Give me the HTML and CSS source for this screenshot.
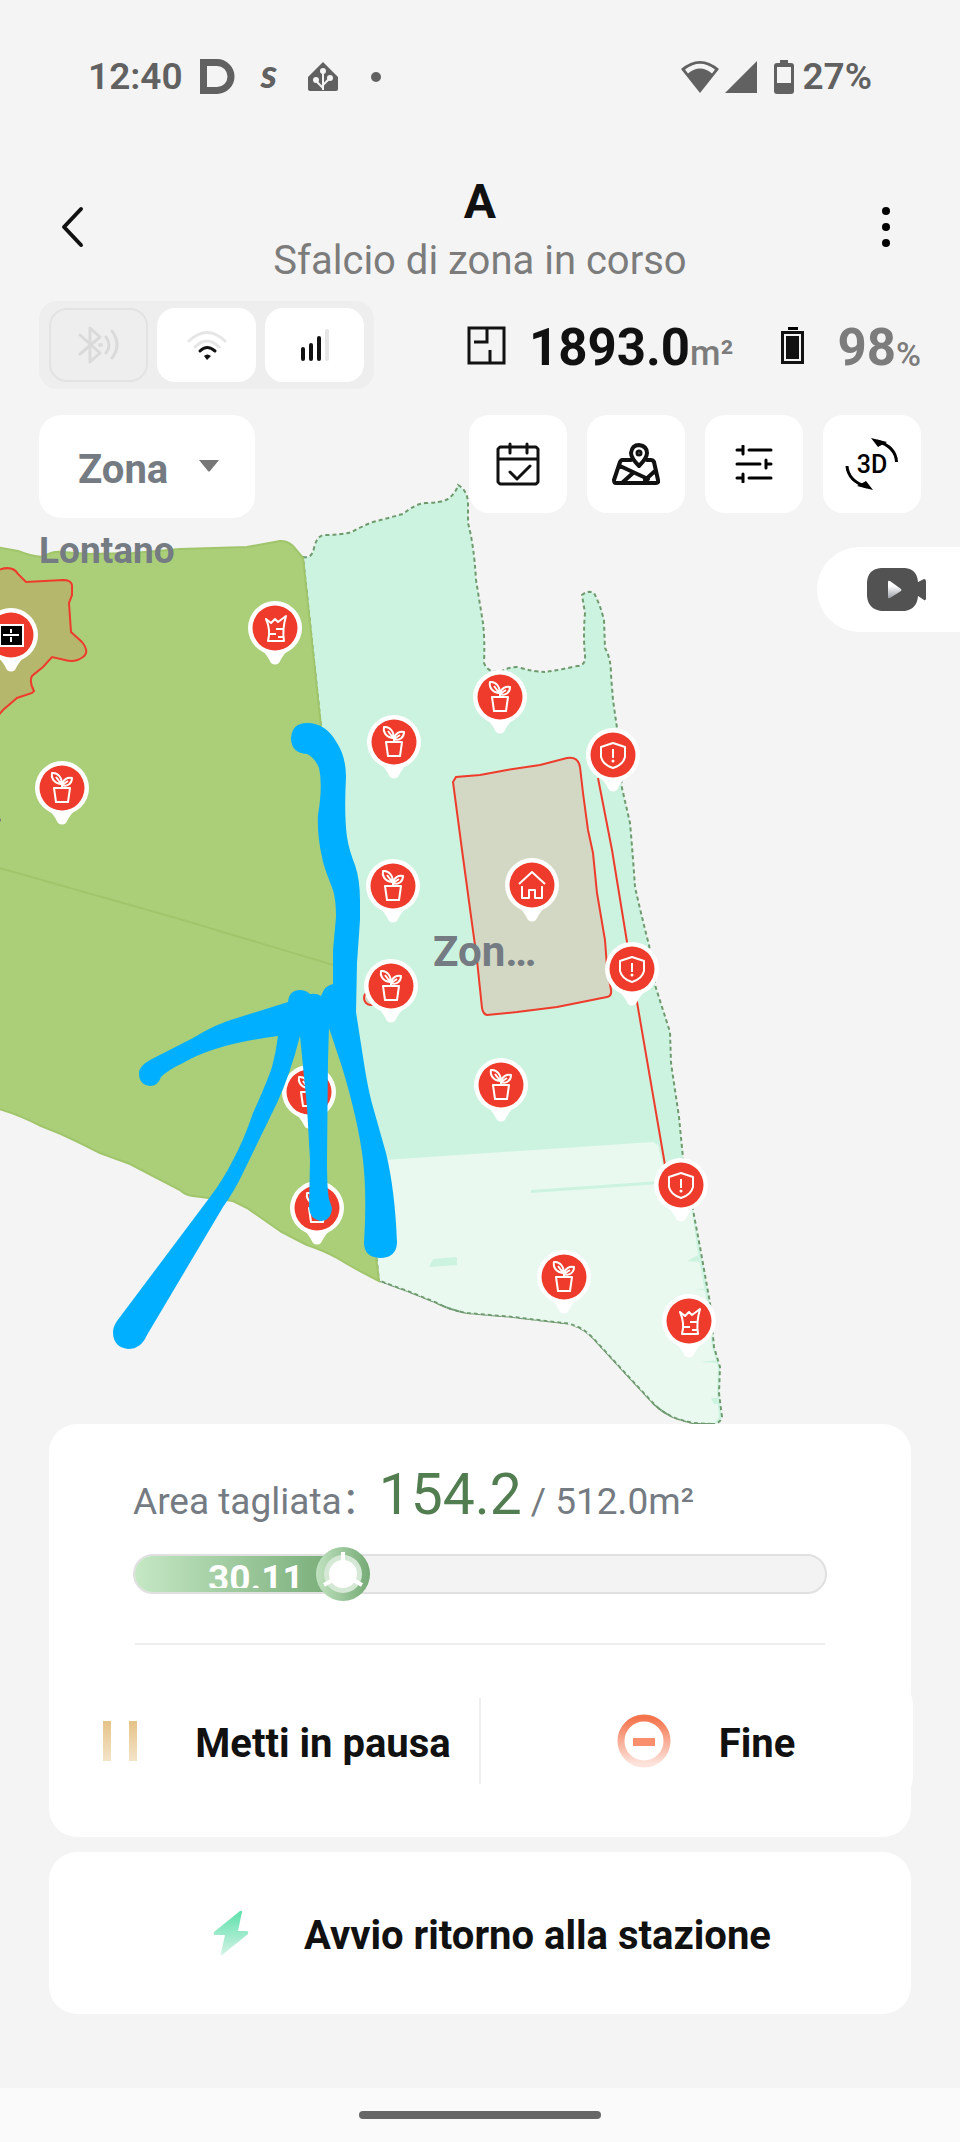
FILE: index.html
```
<!DOCTYPE html>
<html lang="it">
<head>
  <meta charset="UTF-8" />
  <meta name="viewport" content="width=device-width, initial-scale=1" />
  <title>Sfalcio di zona in corso</title>
  <link rel="stylesheet" href="styles.css">
</head>
<body>
  <div class="statusbar">
    <div class="status-left">
      <span class="clock">12:40</span>
      <svg class="ico-d" width="36" height="36" viewBox="0 0 36 36"><path d="M3.500 3.500H17a14 14 0 0 1 0 28H3.500z" fill="none" stroke="#616161" stroke-width="7"/></svg>
      <span class="ico-s">s</span>
      <svg class="ico-home" width="32" height="32" viewBox="0 0 32 32">
        <path d="M16 1L31 16V28a2 2 0 0 1-2 2H3a2 2 0 0 1-2-2V16z" fill="#616161"/>
        <path d="M16 10V29M16 27L9 20M16 24L23 17" stroke="#f4f4f4" stroke-width="2" fill="none"/>
        <g fill="#f4f4f4"><circle cx="16" cy="10" r="3"/><circle cx="9" cy="19" r="3"/><circle cx="23" cy="17" r="3"/></g>
      </svg>
      <span class="more-dot"></span>
    </div>
    <div class="status-right">
      <svg width="40" height="34" viewBox="0 0 40 34">
        <path d="M20 33L1 9Q20-7 39 9z" fill="#616161"/>
        <path d="M5 9.500Q20-2 35 9.500L32 13.500Q20 3.500 8 13.500z" fill="#f4f4f4"/>
      </svg>
      <svg width="34" height="34" viewBox="0 0 34 34"><path d="M33 1V33H1z" fill="#616161"/></svg>
      <svg class="ico-phone-battery" width="20" height="34" viewBox="0 0 20 34">
        <path d="M6 0h8v4H6z" fill="#616161"/>
        <rect y="3" width="20" height="31" rx="3" fill="#616161"/>
        <path d="M3 7h14v16H3z" fill="#f4f4f4"/>
      </svg>
      <span class="clock">27%</span>
    </div>
  </div>

  <header class="header">
    <button class="icon-btn" aria-label="Indietro">
      <svg width="24" height="42" viewBox="0 0 24 42"><path d="M21 3L4 21L21 39" fill="none" stroke="#111" stroke-width="4" stroke-linecap="round" stroke-linejoin="round"/></svg>
    </button>
    <div class="titles">
      <h1>A</h1>
      <p>Sfalcio di zona in corso</p>
    </div>
    <button class="icon-btn menu" aria-label="Menu">
      <svg width="10" height="42" viewBox="0 0 10 42"><circle cx="5" cy="5" r="4"/><circle cx="5" cy="21" r="4"/><circle cx="5" cy="37" r="4"/></svg>
    </button>
  </header>

  <div class="info-row">
    <div class="signals">
      <div class="signal off">
        <svg width="42" height="38" viewBox="0 0 42 38" fill="none" stroke="#dadada" stroke-width="3" stroke-linecap="round" stroke-linejoin="round">
          <path d="M2 9L22 27L12 36V2L22 11L2 28M28 11Q34 19 28 27M34 5Q44 19 34 32"/>
          <path d="M22 19h1" stroke-width="4"/>
        </svg>
      </div>
      <div class="signal">
        <svg width="40" height="30" viewBox="0 0 40 30" fill="none" stroke-width="3" stroke-linecap="round">
          <path d="M2 11Q20-6 38 11M8 17Q20 5 32 17" stroke="#e6e6e6"/>
          <path d="M13 21Q20 14 28 21" stroke="#111" stroke-width="3"/>
          <path d="M17 26Q20 23 24 26L20 30z" fill="#111"/>
        </svg>
      </div>
      <div class="signal">
        <svg width="28" height="32" viewBox="0 0 28 32" stroke="#111" stroke-width="4" stroke-linecap="round">
          <path d="M2 20V30M10 16V30M18 9V30"/>
          <path d="M26 2V30" stroke="#e6e6e6"/>
        </svg>
      </div>
    </div>
    <div class="stats">
      <svg width="39" height="39" viewBox="0 0 39 39" fill="none" stroke="#111" stroke-width="3"><path d="M2 2H37V37H2zM20 2V16H7M23 24V37"/></svg>
      <span class="total">1893.0</span><span class="unit">m²</span>
      <svg class="ico-battery" width="23" height="37" viewBox="0 0 23 37">
        <path d="M7 0h10v3H7z"/>
        <path d="M1.500 5.500h20v30h-20z" fill="none" stroke="#111" stroke-width="3"/>
        <path d="M5 9h13v23H5z" fill="#111"/>
      </svg>
      <span class="charge">98</span><span class="unit percent">%</span>
    </div>
  </div>

  <main class="map-area">
    <svg class="map" viewBox="0 389 960 1035" preserveAspectRatio="xMidYMin slice">
      <defs>
        <symbol id="pin" viewBox="-27 -27 54 64" overflow="visible">
          <path d="M-17 19Q-10 23-4 35Q0 38 4 35Q10 23 17 19z" fill="#fff"/>
          <circle r="27" fill="#fff"/>
          <circle r="22.500" fill="#ee3b2b"/>
        </symbol>
        <g id="plant">
          <use href="#pin" x="-27" y="-27" width="54" height="64"/>
          <path d="M-8 0H8L6 14H-6zM0 0V-4M-1-4C-9-5-11-11-10-15C-4-16 1-9-1-4zM-6-11L0-3C1-9 6-11 10-10C10-4 5-1 0-3L6-7" class="glyph"/>
        </g>
        <g id="trunk">
          <use href="#pin" x="-27" y="-27" width="54" height="64"/>
          <path d="M-7 13Q-4 2-9-9L-4-5L0-9L3-6L11-12Q7 2 9 13zM1 1H8M-6 6H1M3 9H9" class="glyph"/>
        </g>
        <g id="shield">
          <use href="#pin" x="-27" y="-27" width="54" height="64"/>
          <path d="M0-12L12-8V2Q10 10 0 13Q-10 10-12 2V-8zM0-6V3" class="glyph"/>
          <circle cy="6" r="1.500" fill="#fff"/>
        </g>
        <clipPath id="mowable"><path d="M303 557L312 557L317 540L323 535L352 532L668 1032L671 1063L679 1117L683 1158L692 1210L697 1247L707 1303L712 1347L718 1367L717 1393L719 1417L715 1423H693L673 1417L653 1403L627 1375L593 1338L580 1328L563 1323L513 1317L467 1313L437 1303L410 1292L380 1281z"/></clipPath>
      </defs>

      <!-- zona a destra -->
      <path class="zone-mint" d="M303 557Q312 559 314 548Q317 535 325 535Q340 535 352 532Q362 526 373 522L403 514Q415 504 425 503Q440 503 448 499Q456 493 458 485Q467 490 468 502V523Q474 545 476 580L483 623Q485 640 484 663Q488 673 500 672Q508 667 517 667Q535 672 545 672Q560 670 577 666Q586 666 585 655Q583 637 585 613L582 595Q588 590 594 593Q600 604 604 620L605 648Q611 658 611 675L613 700L617 728L622 788L630 823Q633 857 635 887Q641 914 649 945L655 985L670 1032L671 1063L679 1117L683 1158L693 1210L700 1247L710 1303L714 1347L720 1367L719 1393L722 1417Q720 1424 712 1424L693 1423Q680 1420 673 1417Q660 1411 653 1403L627 1375L593 1338Q586 1331 580 1328Q570 1323 563 1323L513 1317L467 1313Q450 1310 437 1303L410 1292L380 1281z"/>
      <g clip-path="url(#mowable)">
        <path d="M340 1163L653 1142L658 1145L666 1178L690 1200L700 1247L724 1367V1424H340z" fill="#e9f9f0"/>
        <path d="M531 1190L660 1181V1184L531 1193zM433 1259L457 1257V1265L429 1267zM687 1261L700 1254V1262zM700 1362L720 1360V1363zM711 1398H720V1404H714zM695 1289H710V1291z" fill="#ccf3df"/>
      </g>
      <path class="zone-edge" d="M712 1424L693 1423Q680 1420 673 1417Q660 1411 653 1403L627 1375L593 1338Q586 1331 580 1328Q570 1323 563 1323L513 1317L467 1313Q450 1310 437 1303L410 1292L380 1281"/>

      <!-- zona a sinistra -->
      <path class="zone-green" d="M-4 547L18 551Q30 556 43 557Q52 551 62 552L90 554L133 553L180 549L247 547L280 541Q288 541 293 546L303 558L321 727L365 1120L376 1257L379 1281Q355 1269 337 1258Q325 1251 307 1245Q295 1239 280 1231L247 1208L233 1201L193 1196Q185 1195 180 1190L153 1176L130 1164L100 1153L80 1143Q60 1133 41 1126Q20 1115-4 1108z"/>
      <path d="M-4 867L183 920L340 967" fill="none" stroke="#a0c56b" stroke-width="2"/>

      <path class="obstacle pond" d="M-4 571Q12 564 18 574L26 582L63 580Q71 580 72 585V595L69 603L71 632L82 642Q90 652 83 657Q75 663 65 660L52 657L43 667L32 676Q29 682 34 691L32 693L17 698L3 710L-4 718z"/>
      <path class="obstacle house" d="M453 782L456 777L480 775L507 770L540 765L567 758Q578 756 580 767L583 793L588 830L593 853L597 893L605 940L607 967L611 990Q612 996 607 997L577 1003L557 1007L517 1012L487 1015Q483 1014 482 1008L477 960L462 850z"/>
      <path d="M598 778L612 850L627 942L637 1002L665 1165" fill="none" stroke="#ee3b2b" stroke-width="2"/>
      <circle class="obstacle house" cx="371" cy="998" r="7"/>

      <text class="zone-label small" x="39" y="563">Lontano</text>
      <text class="zone-label" x="433" y="966">Zon…</text>
      <circle cx="-1" cy="820" r="2" fill="#747b82"/>

      <g>
        <use href="#pin" x="-16" y="608" width="54" height="64"/>
        <rect x="0" y="625" width="23" height="21" stroke="#fff" stroke-width="2"/>
        <path d="M3 635H19M11 629V633M11 637V642" class="glyph"/>
      </g>
      <use href="#trunk" x="275" y="628"/>
      <use href="#plant" x="62" y="788"/>
      <use href="#plant" x="500" y="697"/>
      <use href="#plant" x="394" y="742"/>
      <use href="#plant" x="393" y="886"/>
      <use href="#plant" x="391" y="986"/>
      <use href="#plant" x="501" y="1085"/>
      <use href="#plant" x="309" y="1092"/>
      <use href="#plant" x="317" y="1208"/>
      <use href="#plant" x="564" y="1277"/>
      <use href="#trunk" x="689" y="1321"/>
      <use href="#shield" x="613" y="755"/>
      <use href="#shield" x="632" y="969"/>
      <use href="#shield" x="681" y="1185"/>
      <g transform="translate(532 885)">
        <use href="#pin" x="-27" y="-27" width="54" height="64"/>
        <path d="M-13-1L0-13L13-1M-10 1V13H-3V5H3V13H10V1" class="glyph"/>
      </g>

      <!-- tracciato a mano -->
      <g fill="#00afff">
        <path d="M307 754Q291 753 291 738Q292 723 307 723Q326 723 337 743Q346 757 346 777Q344 815 347 837Q349 850 355 865Q360 880 360 900L360 920L357 963L356 1012L363 1057Q368 1090 373 1107L386 1153Q395 1190 397 1243Q396 1258 380 1258Q364 1257 364 1243Q367 1195 363 1160Q358 1120 342 1067L329 1028L328 1060L327 1160Q327 1190 329 1199L332 1208Q331 1221 320 1221Q310 1219 309 1208L310 1160L307 1107L300 1036Q290 1075 277 1103L243 1173Q235 1190 223 1207L147 1335Q141 1349 128 1349Q113 1347 113 1332Q113 1327 117 1321L210 1197Q223 1180 233 1160Q243 1142 253 1113Q267 1082 272 1067Q276 1052 278 1036Q215 1044 183 1063Q168 1070 161 1077Q158 1086 150 1086Q139 1085 139 1073Q139 1066 150 1060L193 1038Q215 1024 240 1017L288 1002Q289 990 300 990Q306 990 310 994Q317 993 321 996Q325 985 333 984L333 950L336 917Q336 900 333 890Q323 865 322 857Q317 835 318 815Q323 785 319 768Q315 758 307 754z"/>
      </g>
    </svg>

    <div class="toolbar">
      <select class="zone-select" aria-label="Vista mappa"><option>Zona</option></select>
      <div class="tools">
        <button class="tool" aria-label="Programma">
          <svg width="44" height="44" viewBox="0 0 44 44" fill="none" stroke="#111" stroke-width="3" stroke-linecap="round" stroke-linejoin="round">
            <path d="M4 5H40L42 7V40L40 42H4L2 40V7zM2 17H42M14 2V11M31 2V11"/><path d="M14 30L21 37L34 24"/>
          </svg>
        </button>
        <button class="tool" aria-label="Mappa">
          <svg width="48" height="42" viewBox="0 0 48 42" fill="none" stroke="#111" stroke-width="4" stroke-linecap="round" stroke-linejoin="round">
            <path d="M19 17H10Q9 17 8 19L2 37Q2 40 4 40H44Q47 40 46 37L42 19Q41 17 39 17H35M8 23L36 36M11 39L21 30M33 37L43 28"/>
            <path d="M27 23Q19 15 19 10Q20 2 27 2Q35 3 35 10Q35 15 27 23z"/><circle cx="27" cy="10" r="2" stroke-width="3"/>
          </svg>
        </button>
        <button class="tool" aria-label="Impostazioni">
          <svg width="38" height="38" viewBox="0 0 38 38" fill="none" stroke="#000" stroke-width="3" stroke-linecap="round"><path d="M2 5H7M14 5H36M2 19H25M31 19H36M2 33H7M14 33H36M8 1V9M31 15V23M8 29V37"/></svg>
        </button>
        <button class="tool" aria-label="Vista 3D">
          <svg width="54" height="54" viewBox="0 0 54 54" fill="none" stroke="#000" stroke-width="3">
            <path d="M32 4Q51 10 51.500 25M22 50Q3 44 2 29"/>
            <path d="M26 1L42 5L33 10zM28 53L12 49L21 44z" fill="#000" stroke="none"/>
            <text x="27" y="36" text-anchor="middle" class="label-3d">3D</text>
          </svg>
        </button>
      </div>
    </div>
    <button class="camera" aria-label="Video">
      <svg width="59" height="43" viewBox="0 0 59 43">
        <defs><linearGradient id="play" x1="0" y1="0" x2="0" y2="1"><stop offset=".3" stop-color="#fff"/><stop offset="1" stop-color="#9a9da6"/></linearGradient></defs>
        <path d="M14 0H38Q50 1 51 14L57 11Q59 11 59 14V30Q59 33 57 32L51 28Q50 41 38 43H14Q1 41 0 28V14Q1 1 14 0z" fill="#525252"/>
        <path d="M21 14Q21 12 23 13L34 21Q35 22 34 23L23 30Q21 31 21 29z" fill="url(#play)"/>
      </svg>
    </button>
  </main>

  <section class="card">
    <p class="area">
      <span>Area tagliata：</span><strong>154.2</strong><span>/ 512.0m²</span>
    </p>
    <div class="progress" role="progressbar" aria-valuenow="30.11" aria-valuemin="0" aria-valuemax="100">
      <div class="progress-fill" style="width: 30.11%">
        <span class="progress-text">30.11</span>
        <svg class="progress-knob" width="54" height="54" viewBox="0 0 54 54">
          <defs><linearGradient id="knob"><stop offset="0" stop-color="#c0e2bf"/><stop offset="1" stop-color="#75aa75"/></linearGradient></defs>
          <circle cx="27" cy="27" r="27" fill="url(#knob)"/>
          <circle cx="27" cy="27" r="19" fill="#d5e8d5"/>
          <path d="M27 5V20M8 38L20 31M46 38L34 31" stroke="#fff" stroke-width="4"/>
          <circle cx="27" cy="27" r="14" fill="#fff"/>
        </svg>
      </div>
    </div>
    <hr>
    <div class="actions">
      <button class="action pause">
        <svg width="34" height="40" viewBox="0 0 34 40">
          <defs><linearGradient id="gold" x1="0" y1="0" x2="0" y2="1"><stop offset="0" stop-color="#e5c388"/><stop offset="1" stop-color="#f3e4c8"/></linearGradient></defs>
          <path d="M0 0H8V40H0zM26 0H34V40H26z" fill="url(#gold)"/>
        </svg>
        <span>Metti in pausa</span>
      </button>
      <button class="action stop">
        <svg width="54" height="54" viewBox="0 0 54 54">
          <defs><linearGradient id="coral" x1="0" y1="0" x2="0" y2="1"><stop offset="0" stop-color="#f4744c"/><stop offset="1" stop-color="#fde3dc"/></linearGradient></defs>
          <circle cx="27" cy="27" r="23" fill="none" stroke="url(#coral)" stroke-width="7"/>
          <path d="M16 24H38V32H16z" fill="#fa8f6e"/>
        </svg>
        <span>Fine</span>
      </button>
    </div>
  </section>

  <button class="card action return">
    <svg width="36" height="46" viewBox="0 0 36 46">
      <defs><linearGradient id="mint" x1="0" y1="0" x2="0" y2="1"><stop offset="0" stop-color="#5ce0ab"/><stop offset="1" stop-color="#d3f3e5"/></linearGradient></defs>
      <path d="M27 1Q29 0 29 2L25 21H34Q36 22 35 24L9 45Q7 46 8 43L12 25H2Q0 25 1 22z" fill="url(#mint)"/>
    </svg>
    <span>Avvio ritorno alla stazione</span>
  </button>

  <div class="navbar"><span></span></div>
</body>
</html>
```
FILE: styles.css
```
* {
  box-sizing: border-box;
}
body {
  margin: 0;
  min-height: 100vh;
  display: flex;
  flex-direction: column;
  background: #f4f4f4;
  color: #111;
  font-family: Roboto, "Noto Sans CJK SC", sans-serif;
}
button, select {
  font: inherit;
  color: inherit;
  border: none;
  background: none;
  padding: 0;
  cursor: pointer;
}
svg {
  display: block;
  flex-shrink: 0;
}

/* barra di stato */
.statusbar {
  display: flex;
  justify-content: space-between;
  align-items: center;
  padding: 54px 88px 0;
  height: 100px;
  color: #616161;
}
.status-left, .status-right {
  display: flex;
  align-items: center;
}
.clock {
  font-size: 37px;
  font-weight: 600;
  line-height: 46px;
}
.ico-d {
  margin-left: 17px;
}
.ico-s {
  width: 20px;
  margin: 0 26px 0 25px;
  font: italic 900 40px/46px Lato, sans-serif;
  padding-bottom: 8px;
}
.more-dot {
  width: 10px;
  height: 10px;
  margin-left: 32px;
  border-radius: 50%;
  background: #616161;
}
.status-right {
  gap: 4px;
}
.ico-phone-battery {
  margin: 0 4px 0 12px;
}

/* titolo */
.header {
  display: flex;
  justify-content: space-between;
  align-items: center;
  margin-top: 69px;
  padding: 0 60px;
}
.icon-btn {
  display: flex;
  width: 40px;
  padding: 19px 0 21px;
}
.menu {
  justify-content: flex-end;
  padding-right: 9px;
}
.titles {
  text-align: center;
}
h1 {
  margin: 0;
  font-size: 48px;
  line-height: 66px;
}
.titles p {
  margin: 0;
  font-size: 40px;
  line-height: 52px;
  color: #7c7c7c;
}

.info-row {
  display: flex;
  justify-content: space-between;
  align-items: center;
  margin-top: 14px;
  padding: 0 39px;
}
.signals {
  display: flex;
  gap: 9px;
  padding: 7px 10px;
  border-radius: 18px;
  background: #eee;
}
.signal {
  display: flex;
  align-items: center;
  justify-content: center;
  width: 99px;
  height: 74px;
  border-radius: 18px;
  background: #fff;
}
.signal.off {
  background: none;
  border: 2px solid #e3e3e3;
}
.stats {
  display: flex;
  align-items: center;
  font-weight: bold;
  line-height: 60px;
}
.total, .charge {
  padding-top: 6px;
  font-size: 51px;
}
.total {
  margin-left: 23px;
}
.unit {
  padding-top: 18px;
  font-size: 35px;
  font-weight: 500;
  line-height: 50px;
  color: #7c7c7c;
}
.percent {
  font-size: 34px;
}
.ico-battery {
  margin: 0 33px 0 48px;
}
.charge {
  color: #7c7c7c;
}

/* mappa */
.map-area {
  position: relative;
  flex: 1 0 1035px;
  overflow: hidden;
}
.map {
  position: absolute;
  inset: 0;
  width: 100%;
  height: 100%;
}
.zone-mint {
  fill: #ccf3df;
}
.zone-edge {
  fill: none;
}
.zone-mint, .zone-edge {
  stroke: #6f9a6f;
  stroke-width: 2;
  stroke-dasharray: 4 3;
}
.zone-green {
  fill: #abcf79;
  stroke: #a0c56b;
  stroke-width: 2;
}
.obstacle {
  stroke: #ee3b2b;
  stroke-width: 2;
}
.pond {
  fill: #b5b76c;
}
.house {
  fill: #d3d8c4;
}
.glyph {
  fill: none;
  stroke: #fff;
  stroke-width: 2;
  stroke-linejoin: round;
}
.zone-label {
  fill: #747b82;
  font-size: 42px;
  font-weight: bold;
}
.zone-label.small {
  font-size: 37px;
}
.toolbar {
  position: relative;
  display: flex;
  justify-content: space-between;
  align-items: flex-start;
  padding: 26px 39px 0;
}
.zone-select {
  appearance: none;
  width: 216px;
  height: 103px;
  padding: 5px 0 0 39px;
  border-radius: 22px;
  background: #fff url("data:image/svg+xml,%3Csvg xmlns='http://www.w3.org/2000/svg' width='20' height='12'%3E%3Cpath d='M0 0h20L11 11q-1 1-2 0z' fill='%23777'/%3E%3C/svg%3E") no-repeat right 36px top 45px;
  color: #747b82;
  font-size: 40px;
  font-weight: bold;
}
.tools {
  display: flex;
  gap: 20px;
}
.tool {
  display: flex;
  align-items: center;
  justify-content: center;
  width: 98px;
  height: 98px;
  border-radius: 20px;
  background: #fff;
}
.label-3d {
  fill: #000;
  stroke: none;
  font-size: 25px;
  font-weight: 500;
}
.camera {
  position: relative;
  display: flex;
  align-items: center;
  width: 143px;
  height: 85px;
  margin: 29px 0 0 auto;
  padding-left: 50px;
  border-radius: 43px 0 0 43px;
  background: #fff;
}

/* pannello inferiore */
.card {
  margin: 0 49px 15px;
  border-radius: 28px;
  background: #fff;
}
section.card {
  padding: 41px 0 32px;
}
.area {
  display: flex;
  align-items: baseline;
  height: 60px;
  margin: 0 84px;
  font-size: 37px;
  line-height: 60px;
  color: #747b82;
}
.area strong {
  margin-right: 9px;
  font-size: 57px;
  font-weight: normal;
  color: #527d50;
}
.progress {
  height: 40px;
  margin: 29px 84px 49px;
  border: 2px solid #e0e0e0;
  border-radius: 20px;
  background: #f3f3f3;
}
.progress-fill {
  position: relative;
  height: 36px;
  border-radius: 18px 0 0 18px;
  background: linear-gradient(to right, #c5e8c5, #75aa75);
}
.progress-text {
  position: absolute;
  top: 2px;
  right: 39px;
  height: 30px;
  overflow: hidden;
  font-size: 37px;
  font-weight: bold;
  line-height: 42px;
  color: #fff;
}
.progress-knob {
  position: absolute;
  top: -9px;
  right: -27px;
}
hr {
  width: calc(100% - 172px);
  height: 2px;
  margin: 0 auto 32px;
  border: none;
  background: #eee;
}
.actions {
  display: flex;
  align-items: center;
  height: 128px;
  margin-right: -2px;
  border-radius: 28px;
  background: #fff;
}
.action {
  display: flex;
  align-items: center;
  justify-content: center;
  font-size: 40px;
  font-weight: bold;
}
.action span {
  padding-top: 4px;
}
.pause, .stop {
  width: 50%;
  height: 86px;
}
.pause {
  gap: 58px;
  padding-left: 26px;
  border-right: 2px solid #eee;
}
.stop {
  gap: 48px;
  padding-left: 18px;
}
.return {
  gap: 55px;
  height: 162px;
  padding-left: 24px;
}
.navbar {
  display: flex;
  justify-content: center;
  margin-top: 59px;
  padding: 23px;
  background: #fafafa;
}
.navbar span {
  width: 242px;
  height: 8px;
  border-radius: 4px;
  background: #666;
}
```
